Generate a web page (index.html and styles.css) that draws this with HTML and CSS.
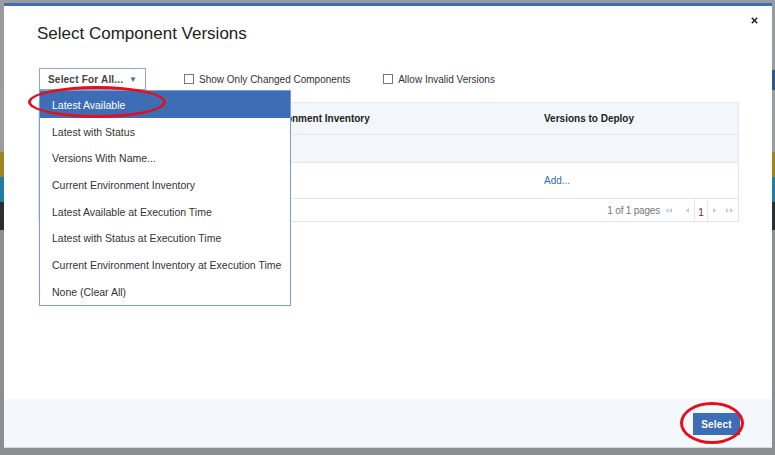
FILE: index.html
```html
<!DOCTYPE html>
<html>
<head>
<meta charset="utf-8">
<link rel="stylesheet" href="styles.css">
</head>
<body>
<div class="page">
  <div class="pg-a"></div>
  <div class="pg-b"><span class="pg-blue"></span></div>
  <div class="pg-c"></div>
  <div class="pg-gold"></div>
  <div class="pg-teal"></div>
  <div class="pg-dark"></div>
</div>

<div class="modal">
  <button class="close" aria-label="Close">
    <svg width="7" height="7" viewBox="0 0 7 7"><path d="M0.8 0.8L6.2 6.2M6.2 0.8L0.8 6.2" stroke="#1f1f1f" stroke-width="1.5" fill="none"/></svg>
  </button>
  <div class="modal-body">
    <h1 class="title">Select Component Versions</h1>
    <div class="toolbar">
      <div class="dd">
        <div class="dd-btn"><span>Select For All...</span><span class="caret">&#9660;</span></div>
        <ul class="dd-menu">
          <li class="active">Latest Available</li>
          <li>Latest with Status</li>
          <li>Versions With Name...</li>
          <li>Current Environment Inventory</li>
          <li>Latest Available at Execution Time</li>
          <li>Latest with Status at Execution Time</li>
          <li>Current Environment Inventory at Execution Time</li>
          <li>None (Clear All)</li>
        </ul>
      </div>
      <label class="chk chk-1"><span class="box"></span>Show Only Changed Components</label>
      <label class="chk chk-2"><span class="box"></span>Allow Invalid Versions</label>
    </div>
    <div class="grid">
      <div class="row head"><div class="cell">Component</div><div class="cell">Current Environment Inventory</div><div class="cell">Versions to Deploy</div></div>
      <div class="row group"><div class="cell"></div><div class="cell"></div><div class="cell"></div></div>
      <div class="row data"><div class="cell"></div><div class="cell"></div><div class="cell link">Add...</div></div>
      <div class="pager">
        <span class="pg-text">1 of 1 pages</span>
        <span class="ic ic-first"><svg width="7" height="5" viewBox="0 0 7 5"><path d="M3.5 0L0.5 2.5L3.5 5Z M7 0L4 2.5L7 5Z" fill="#c9ccd1"/></svg></span>
        <span class="ic ic-prev"><svg width="4" height="5" viewBox="0 0 4 5"><path d="M4 0L0.5 2.5L4 5Z" fill="#c9ccd1"/></svg></span>
        <span class="pg-num">1</span>
        <span class="ic ic-next"><svg width="4" height="5" viewBox="0 0 4 5"><path d="M0 0L3.5 2.5L0 5Z" fill="#c9ccd1"/></svg></span>
        <span class="ic ic-last"><svg width="8" height="5" viewBox="0 0 8 5"><path d="M0 0L3 2.5L0 5Z M4 0L7 2.5L4 5Z" fill="#c9ccd1"/></svg></span>
      </div>
    </div>
  </div>
  <div class="modal-foot"><button class="btn">Select</button></div>
</div>

<div class="mark mark-1"></div>
<div class="mark mark-2"></div>
</body>
</html>
```

FILE: styles.css
```css
body {
  margin: 0;
  width: 775px;
  height: 455px;
  overflow: hidden;
  position: relative;
  background: #8d8e92;
  font-family: "Liberation Sans", Arial, sans-serif;
}

.page { display: flex; flex-direction: column; }
.pg-a { height: 70px; background: #9a9b9e; }
.pg-b { height: 20px; background: #9a9b9e; display: flex; justify-content: flex-end; }
.pg-blue { width: 4px; background: #2c5a8c; }
.pg-c { height: 62px; background: #9c9da0; }
.pg-gold { height: 25px; background: #9d8622; }
.pg-teal { height: 25px; background: #217ca6; }
.pg-dark { height: 28px; background: #2d2e30; }

.modal {
  position: absolute;
  left: 4px;
  top: 3px;
  width: 768px;
  height: 445px;
  box-sizing: border-box;
  background: #fff;
  border-top: 3px solid #3d6db4;
  display: flex;
  flex-direction: column;
}

.close {
  position: absolute;
  top: 11px;
  right: 14px;
  width: 7px;
  height: 7px;
  padding: 0;
  border: 0;
  background: transparent;
  display: block;
}
.close svg { display: block; }

.modal-body {
  flex: 1;
  padding: 17px 33px 0 34px;
}

.title {
  margin: 0 0 0 -1px;
  font-size: 17px;
  font-weight: normal;
  line-height: 22px;
  color: #222;
}

.toolbar {
  display: flex;
  align-items: center;
  height: 22px;
  margin-top: 23px;
}

.dd {
  position: relative;
  margin-left: 1px;
  width: 107px;
  height: 22px;
}
.dd-btn {
  box-sizing: border-box;
  height: 22px;
  border: 1px solid #8ba5cf;
  display: flex;
  align-items: center;
  padding-left: 8px;
  font-size: 10px;
  font-weight: bold;
  letter-spacing: 0.2px;
  color: #444;
}
.caret {
  margin-left: auto;
  margin-right: 8px;
  font-size: 8px;
  color: #3d6db4;
}
.dd-menu {
  position: absolute;
  top: 22px;
  left: 0;
  width: 252px;
  box-sizing: border-box;
  margin: 0;
  padding: 0;
  list-style: none;
  background: #fff;
  border: 1px solid #7c9dcf;
  z-index: 2;
}
.dd-menu li {
  height: 26.7px;
  line-height: 28.6px;
  padding-left: 12px;
  font-size: 10.5px;
  color: #333;
  white-space: nowrap;
}
.dd-menu li.active {
  background: #3d6db4;
  color: #fff;
}

.chk {
  display: flex;
  align-items: center;
  font-size: 10px;
  color: #333;
}
.chk-1 { margin-left: 38px; }
.chk-2 { margin-left: 33px; }
.box {
  width: 10px;
  height: 10px;
  box-sizing: border-box;
  border: 1px solid #777;
  margin-right: 5px;
  margin-top: -1px;
}

.grid {
  margin-top: 12px;
  border: 1px solid #e3e7ec;
}
.row {
  display: grid;
  grid-template-columns: 173px 322px 1fr;
  border-bottom: 1px solid #e3e7ec;
}
.cell {
  display: flex;
  align-items: center;
  padding-left: 10px;
  font-size: 10px;
  color: #333;
}
.head { height: 31px; background: #f3f6fa; }
.head .cell { font-weight: bold; color: #222; }
.group { height: 27px; background: #f3f6fa; }
.data { height: 35px; }
.link { color: #2f6db5; }

.pager {
  height: 22px;
  display: flex;
  justify-content: flex-end;
  align-items: center;
  padding-right: 4px;
  font-size: 10px;
  color: #777;
}
.pg-text { margin-right: 5px; letter-spacing: -0.2px; }
.ic { display: flex; align-items: center; }
.ic svg { display: block; }
.ic-first { margin-right: 13px; }
.ic-prev { margin-right: 5px; }
.pg-num {
  align-self: stretch;
  width: 14px;
  border-left: 1px solid #e3e7ec;
  border-right: 1px solid #e3e7ec;
  background: #fff;
  color: #7a1c1c;
  font-size: 10px;
  text-align: center;
  padding-top: 8px;
  box-sizing: border-box;
  line-height: 12px;
}
.ic-next { margin-left: 5px; }
.ic-last { margin-left: 9px; }

.modal-foot {
  height: 49px;
  box-sizing: border-box;
  background: #f4f7fb;
  border-bottom: 1px solid #d6d9de;
  display: flex;
  justify-content: flex-end;
  align-items: flex-start;
  padding: 14px 32px 0 0;
}
.btn {
  width: 47px;
  height: 22px;
  border: 0;
  padding: 0;
  background: #3d6db4;
  color: #fff;
  font-family: "Liberation Sans", Arial, sans-serif;
  font-size: 10px;
  font-weight: bold;
  letter-spacing: 0.2px;
}

.mark {
  position: absolute;
  box-sizing: border-box;
  border: 3px solid #e3101b;
  border-radius: 50%;
  z-index: 5;
}
.mark-1 { left: 28px; top: 86px; width: 138px; height: 32px; }
.mark-2 { left: 680px; top: 402px; width: 64px; height: 42px; }
```
